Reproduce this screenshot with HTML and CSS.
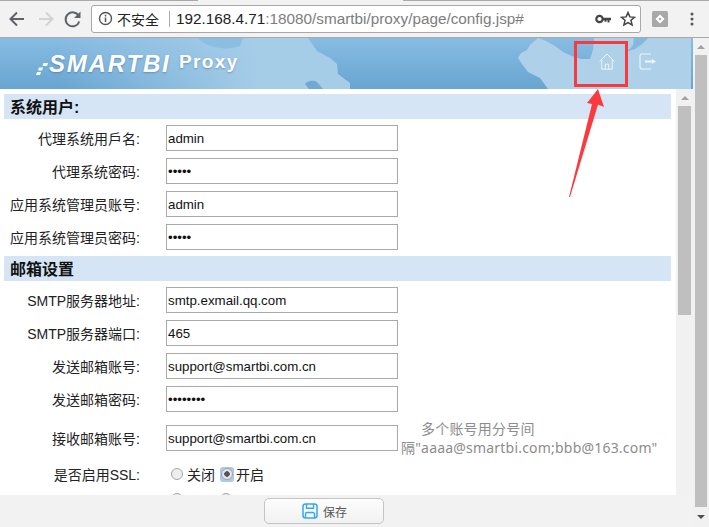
FILE: index.html
```html
<!DOCTYPE html>
<html lang="zh">
<head>
<meta charset="utf-8">
<title>config</title>
<link rel="stylesheet" href="styles.css">
</head>
<body>
<div class="toolbar">
  <svg class="nav" width="91" height="26" viewBox="0 0 91 26" fill="none">
    <path d="M24 13H11M17 6.500 10.500 13l6.500 6.500" stroke="#5f6368" stroke-width="2"/>
    <path d="M39 13h13M46 6.500l6.500 6.500-6.500 6.500" stroke="#d2d3d5" stroke-width="2"/>
    <path d="M78.800 10a7 7 0 1 0 .5 5.500" stroke="#5f6368" stroke-width="2"/>
    <path d="M80.500 5.500v6.500h-6.500z" fill="#5f6368"/>
  </svg>
  <div class="omnibox">
    <svg class="info" width="15" height="15" viewBox="0 0 15 15" fill="none">
      <circle cx="7.500" cy="7.500" r="6" stroke="#555" stroke-width="1.400"/>
      <path d="M7.500 6.500v4.500M7.500 3.700v1.700" stroke="#555" stroke-width="1.500"/>
    </svg>
    <span class="insecure">不安全</span>
    <span class="sep"></span>
    <span class="url"><b>192.168.4.71</b>:18080/smartbi/proxy/page/config.jsp#</span>
    <svg class="key" width="16" height="10" viewBox="0 0 16 10">
      <circle cx="4.500" cy="5" r="3.200" fill="none" stroke="#444" stroke-width="2.200"/>
      <path d="M8 3.800h8v2.400h-1.500v2.300h-2V6.200h-1v1.500H9.500V6.200H8z" fill="#444"/>
    </svg>
    <svg class="star" width="16" height="16" viewBox="0 0 16 16">
      <path d="M8 1.600l1.900 4.300 4.600.4-3.500 3 1.100 4.600L8 11.500l-4.100 2.400L5 9.300l-3.500-3 4.600-.4z" fill="none" stroke="#444" stroke-width="1.500"/>
    </svg>
  </div>
  <svg class="ext" width="16" height="16" viewBox="0 0 16 16">
    <rect width="16" height="16" rx="1.500" fill="#a9a9a9"/>
    <path d="M8 3.500 12.500 8 8 12.500 3.500 8z" fill="#fff"/>
    <circle cx="8" cy="8" r="1.300" fill="#a9a9a9"/>
  </svg>
  <svg class="menu" width="4" height="14" viewBox="0 0 4 14">
    <circle cx="2" cy="2" r="1.500" fill="#555"/>
    <circle cx="2" cy="7" r="1.500" fill="#555"/>
    <circle cx="2" cy="12" r="1.500" fill="#555"/>
  </svg>
</div>
<div class="window">
  <div class="app">
    <header class="banner">
      <svg class="map" width="693" height="51" viewBox="0 0 693 51">
        <defs>
          <linearGradient id="fade" x1="60" x2="260" y1="0" y2="0" gradientUnits="userSpaceOnUse">
            <stop offset="0" stop-color="#a6cde8" stop-opacity="0"/>
            <stop offset="1" stop-color="#a6cde8"/>
          </linearGradient>
        </defs>
        <path d="M60 51V0h248l9 13 13 7 7 6 1 10 12 9v6z" fill="url(#fade)"/>
        <path d="M198 0c6 8 26 14 42 8l3-8z" fill="#8cbee2"/>
        <path d="M305 46c3-4 9-4 12-2l6 7h-14z" fill="#6fa9d5"/>
        <path d="M538 0l8 3 9 5 8 6 9 4 9 3h9l3-9 1-12h97v51H548l-8-11-12-6-6-8-4-6 3-5 6-3 3-5z" fill="#aed0e8"/>
        <path d="M622 15c6-2 9-5 11-8l1-7h14c-3 4-8 8-13 11z" fill="#84b9df"/>
      </svg>
      <div class="brand">
        <svg class="dots" width="12" height="14" viewBox="0 0 12 14">
          <path d="M7.500 1H12L11 4H6.500zM3 5.500h4L6 8.500H2zM1 10h4l-1 3H0z" fill="#fff"/>
        </svg>
        <span class="smartbi">SMARTBI</span>
        <span class="proxy">Proxy</span>
      </div>
      <svg class="home" width="16" height="17" viewBox="0 0 16 17" fill="none">
        <path d="M.7 8.500 8 1l7.300 7.500M2.800 6.800v9.400h10.400V6.800M6.300 16.200v-5h3.400v5" stroke="#eef6fb" stroke-width="1"/>
      </svg>
      <svg class="logout" width="18" height="17" viewBox="0 0 18 17" fill="none">
        <path d="M12 1H3a2 2 0 0 0-2 2v11a2 2 0 0 0 2 2h9" stroke="#eef6fb" stroke-width="1.100"/>
        <path d="M6 8.500h7.500" stroke="#eef6fb" stroke-width="2"/>
        <path d="M13 6l4 2.500-4 2.500z" fill="#eef6fb"/>
      </svg>
    </header>
    <div class="body">
      <form class="form">
        <h2 class="head">系统用户:</h2>
        <div class="row"><label>代理系统用戶名:</label><input class="field" type="text" value="admin"></div>
        <div class="row"><label>代理系统密码:</label><input class="field" type="password" value="admin"></div>
        <div class="row"><label>应用系统管理员账号:</label><input class="field" type="text" value="admin"></div>
        <div class="row"><label>应用系统管理员密码:</label><input class="field" type="password" value="admin"></div>
        <h2 class="head second">邮箱设置</h2>
        <div class="row"><label>SMTP服务器地址:</label><input class="field" type="text" value="smtp.exmail.qq.com"></div>
        <div class="row"><label>SMTP服务器端口:</label><input class="field" type="text" value="465"></div>
        <div class="row"><label>发送邮箱账号:</label><input class="field" type="text" value="support@smartbi.com.cn"></div>
        <div class="row"><label>发送邮箱密码:</label><input class="field" type="password" value="password"></div>
        <div class="row tall">
          <label>接收邮箱账号:</label><input class="field" type="text" value="support@smartbi.com.cn">
          <p class="note">多个账号用分号间<br>隔"aaaa@smartbi.com;bbb@163.com"</p>
        </div>
        <div class="row radios">
          <label>是否启用SSL:</label>
          <span class="radio"></span><span class="opt">关闭</span>
          <span class="ring"><span class="radio on"></span></span><span class="opt">开启</span>
        </div>
        <div class="row radios">
          <label></label>
          <span class="radio gap"></span><span class="radio"></span>
        </div>
      </form>
      <div class="scroll inner">
        <span class="up"></span><span class="thumb"></span>
      </div>
    </div>
    <footer class="foot">
      <button class="save" type="button">
        <svg width="16" height="16" viewBox="0 0 16 16" fill="none">
          <rect x="1" y="1" width="14" height="14" rx="2.500" stroke="#35a8ee" stroke-width="1.500"/>
          <path d="M4.500 1v4.200h7V1M3.500 15v-4a1.500 1.500 0 0 1 1.500-1.500h6a1.500 1.500 0 0 1 1.500 1.500v4" stroke="#35a8ee" stroke-width="1.400"/>
        </svg>
        <span>保存</span>
      </button>
    </footer>
  </div>
  <div class="scroll outer">
    <span class="up"></span><span class="thumb"></span><span class="down"></span>
  </div>
  <svg class="mark" width="709" height="489" viewBox="0 0 709 489" fill="none">
    <rect x="575.500" y="4.500" width="51" height="43" stroke="#f83a3e" stroke-width="3"/>
    <path d="M598 51l6 18-6-2.500L570 159h-1l23-93-5-1z" fill="#fb3a3e"/>
  </svg>
</div>
</body>
</html>
```
FILE: styles.css
```css
* { box-sizing: border-box; }
html, body { margin: 0; height: 100%; overflow: hidden; }
body {
  background: #fff;
  color: #222;
  font-family: "Liberation Sans", "Noto Sans CJK SC", sans-serif;
  font-size: 14px;
}
.toolbar {
  height: 38px;
  display: flex;
  align-items: center;
  background:
    linear-gradient(90deg, #aaa 198px, transparent 198px, transparent 403px, #aaa 403px) 0 0 / 100% 1px no-repeat,
    #f2f2f2;
  border-bottom: 1px solid #a9a9a9;
}
.nav { flex: none; }
.omnibox {
  width: 550px;
  height: 28px;
  display: flex;
  align-items: center;
  padding: 0 4px 0 6px;
  background: #fff;
  border: 1px solid #a8a8a8;
  border-radius: 3px;
}
.info { flex: none; }
.insecure { margin-left: 4px; font-size: 14px; color: #222; }
.sep { width: 1px; height: 16px; margin: 0 6px 0 10px; background: #aaa; }
.url { flex: 1; font-size: 15.300px; color: #7d7d7d; white-space: nowrap; }
.url b { font-weight: normal; color: #222; }
.key { margin-right: 9px; }
.ext { margin-left: 11px; }
.menu { margin-left: 22px; }
.window { position: relative; display: flex; height: 489px; }
.app { width: 693px; display: flex; flex-direction: column; }
.banner {
  position: relative;
  height: 51px;
  flex: none;
  display: flex;
  align-items: center;
  background: linear-gradient(#88bce3, #67a5d0);
  overflow: hidden;
}
.map { position: absolute; left: 0; top: 0; }
.brand { position: relative; display: flex; align-items: center; margin-left: 36px; color: #fff; }
.dots { margin-top: 11px; }
.smartbi {
  width: 122px;
  margin-left: 1px;
  font-size: 24px;
  font-weight: bold;
  font-style: italic;
  letter-spacing: 1.800px;
  white-space: nowrap;
  text-shadow: 0 1px 2px rgba(40, 80, 120, .4);
}
.proxy {
  margin: -3px 0 0 8px;
  font-size: 19px;
  font-weight: bold;
  letter-spacing: 1.400px;
  text-shadow: 0 1px 2px rgba(40, 80, 120, .4);
}
.home { position: absolute; left: 599px; top: 15px; }
.logout { position: absolute; left: 639px; top: 15px; }
.body { flex: 1; min-height: 0; display: flex; overflow: hidden; }
.form { width: 676px; flex: none; padding: 5px 5px 0 4px; overflow: hidden; }
.head {
  height: 25px;
  margin: 0;
  padding-left: 6px;
  background: #d5e5f6;
  color: #111;
  font-size: 16px;
  font-weight: bold;
  line-height: 28px;
}
.second { margin-top: 3px; }
.row {
  display: flex;
  align-items: center;
  height: 32px;
  margin-bottom: 1px;
}
.head + .row { margin-top: 3px; }
.row label {
  width: 136px;
  flex: none;
  margin-right: 26px;
  text-align: right;
  font-size: 14px;
  color: #222;
}
.field {
  width: 232px;
  height: 26px;
  padding: 0 2px 0 1px;
  border: 1px solid #a9a9a9;
  background: #fff;
  color: #111;
  font-family: "Liberation Sans", sans-serif;
  font-size: 13.300px;
  outline: none;
}
.tall { height: 44px; margin-bottom: 0; }
.note {
  margin: -1px 0 0 3px;
  color: #8c8c8c;
  font-family: "Noto Sans", "Noto Sans CJK SC", sans-serif;
  font-size: 14px;
  line-height: 19px;
  letter-spacing: .2px;
  text-indent: 20px;
  white-space: nowrap;
}
.radios { height: 28px; margin-bottom: -3px; }
.radios label { margin-right: 31px; }
.radio {
  width: 12px;
  height: 12px;
  flex: none;
  border: 1px solid #a5a5a5;
  border-radius: 50%;
  background: #eee;
}
.radio.gap { margin-right: 37px; }
.ring {
  width: 14px;
  height: 15px;
  flex: none;
  display: flex;
  align-items: center;
  justify-content: center;
  border-radius: 3px;
  background: #a8c8f5;
}
.radio.on { background: radial-gradient(circle, #555 0 2.500px, #e4e4e4 3px); }
.opt { margin: 0 5px 0 4px; font-size: 14px; color: #222; }
.ring + .opt { margin-left: 2px; }
.scroll { flex: none; display: flex; flex-direction: column; align-items: center; background: #f1f1f1; }
.inner { width: 17px; }
.outer { width: 16px; }
.up, .down { width: 0; height: 0; border: 4px solid transparent; flex: none; }
.up { border-bottom: 4px solid #a3a3a3; border-top: 0; }
.down { margin: 8px 0 0; border-top: 4px solid #505050; border-bottom: 0; }
.thumb { background: #bfbfbf; flex: none; }
.inner .up { margin-top: 7px; }
.inner .thumb { width: 13px; height: 209px; margin-top: 6px; }
.outer .up { margin-top: 7px; }
.outer .thumb { width: 12px; height: 452px; margin-top: 6px; }
.foot {
  height: 32px;
  flex: none;
  display: flex;
  justify-content: center;
  align-items: center;
  background: #f2f2f2;
  padding-right: 45px;
}
.save {
  width: 120px;
  height: 26px;
  display: flex;
  justify-content: center;
  align-items: center;
  gap: 5px;
  padding: 0 0 0 1px;
  border: 1px solid #c4c4c4;
  border-radius: 5px;
  background: linear-gradient(#fdfdfd, #f1f1f1);
  color: #555;
  font-family: "Noto Sans CJK SC", sans-serif;
  font-size: 12px;
}
.mark { position: absolute; left: 0; top: 0; pointer-events: none; }
```
